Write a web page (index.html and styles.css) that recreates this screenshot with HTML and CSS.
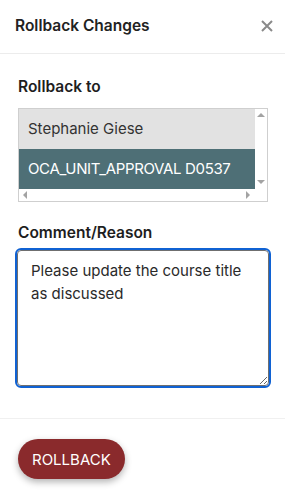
FILE: index.html
```html
<!doctype html>
<html>
    <head>
        <link rel="stylesheet" href="styles.css">
    </head>
    <body>
    <div class="dialog">
        <div class="dialog-header">
            <div class="dialog-title">Rollback Changes</div>
            <div class="dialog-close">
                <svg width="12" height="12" viewBox="0 0 12 12">
                    <path d="M1 1 L11 11 M11 1 L1 11" stroke="#8a8a8a" stroke-width="2" fill="none"/>
                </svg>
            </div>
        </div>

        <div class="dialog-body">
            <div class="field-label">Rollback to</div>
            <div class="listbox">
                <ul class="listbox-options">
                    <li>Stephanie Giese</li>
                    <li class="selected">OCA_UNIT_APPROVAL D0537</li>
                </ul>
                <div class="scroll-v">
                    <span class="arrow arrow-up"></span>
                    <span class="arrow arrow-down"></span>
                </div>
                <div class="scroll-h">
                    <span class="arrow arrow-left"></span>
                    <span class="arrow arrow-right"></span>
                </div>
                <div class="scroll-corner"></div>
            </div>

            <div class="field-label comment-label">Comment/Reason</div>
            <textarea class="comment-box">Please update the course title as discussed</textarea>
        </div>

        <div class="dialog-footer">
            <button class="rollback-button">Rollback</button>
        </div>
    </div>
    </body>
</html>
```

FILE: styles.css
```css
body {
    margin: 0;
    font-family: Inter, "Liberation Sans", sans-serif;
    background-color: white;
    color: #222;
}
* {
    font-family: inherit;
    box-sizing: border-box;
}

.dialog {
    display: flex;
    flex-direction: column;
    min-height: 498px;
}

.dialog-header {
    height: 54px;
    display: flex;
    align-items: center;
    justify-content: space-between;
    padding: 0 12px 2px 15px;
    border-bottom: 1px solid #ececec;
}

.dialog-title {
    font-size: 15.5px;
    font-weight: 600;
    color: #222;
}

.dialog-close {
    display: flex;
    width: 12px;
    height: 12px;
}

.dialog-body {
    padding: 24px 17px 32px 18px;
    border-bottom: 1px solid #f0f0f0;
}

.field-label {
    font-size: 15.5px;
    line-height: 18px;
    font-weight: 600;
    color: #1e1e1e;
    margin-bottom: 12px;
}

.comment-label {
    margin-top: 22px;
    margin-bottom: 8px;
}

.listbox {
    display: grid;
    grid-template-columns: 1fr 12px;
    grid-template-rows: 80px 12px;
    border: 1px solid #cfcfcf;
    background-color: white;
}

.listbox-options {
    margin: 0;
    padding: 0;
    list-style-type: none;
    font-size: 15px;
    color: #333;
}

.listbox-options li {
    height: 40px;
    line-height: 40px;
    padding-left: 9px;
    white-space: nowrap;
    overflow: hidden;
    background-color: #e2e2e2;
}

.listbox-options li.selected {
    background-color: #4e6f76;
    color: white;
    letter-spacing: -0.35px;
}

.scroll-v {
    display: flex;
    flex-direction: column;
    justify-content: space-between;
    align-items: center;
    padding: 4px 0 5px;
}

.scroll-h {
    display: flex;
    justify-content: space-between;
    align-items: center;
    padding: 0 5px 0 4px;
}

.arrow {
    width: 0;
    height: 0;
    border: 4px solid transparent;
}
.arrow-up { border-bottom-color: #a3a3a3; border-top-width: 0; }
.arrow-down { border-top-color: #a3a3a3; border-bottom-width: 0; }
.arrow-left { border-right-color: #a3a3a3; border-left-width: 0; }
.arrow-right { border-left-color: #a3a3a3; border-right-width: 0; }

.comment-box {
    display: block;
    width: 252px;
    height: 136px;
    margin-left: -1px;
    padding: 8px 14px 8px 13px;
    border: 1px solid #6f6f6f;
    border-radius: 4px;
    outline: 2px solid #1062d3;
    outline-offset: 0;
    font-size: 15px;
    line-height: 23px;
    color: #2a2a2a;
    resize: vertical;
}

.dialog-footer {
    padding: 20px 18px;
}

.rollback-button {
    height: 40px;
    padding: 0 14px;
    border: none;
    border-radius: 20px;
    background-color: #8a2a2c;
    color: white;
    font-size: 15px;
    text-transform: uppercase;
    box-shadow: 0 3px 7px rgba(0, 0, 0, 0.3);
}
```
